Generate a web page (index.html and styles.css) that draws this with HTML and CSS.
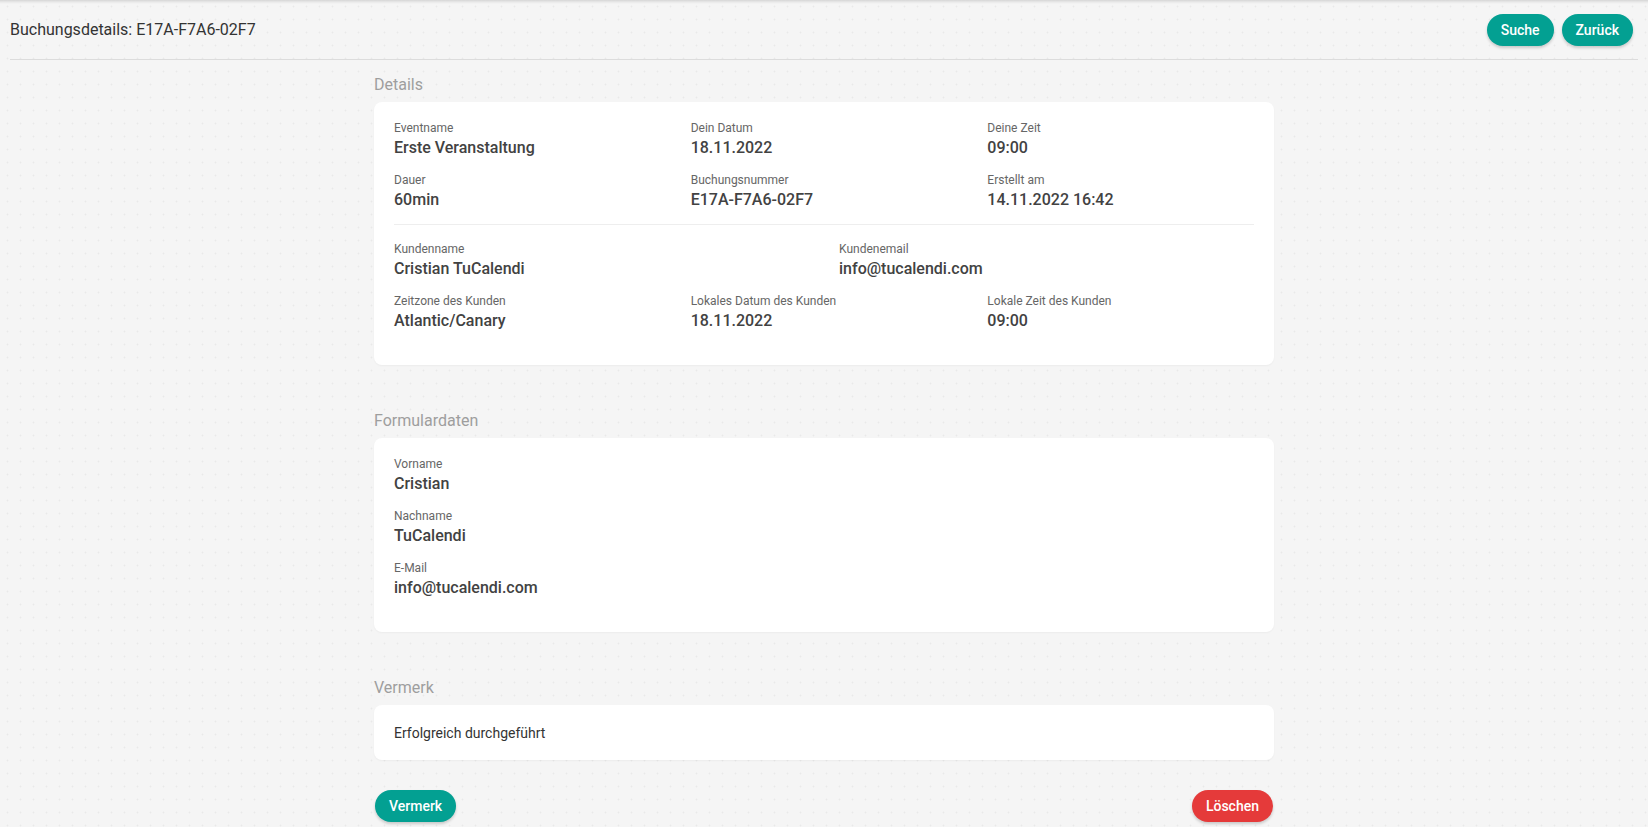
FILE: index.html
```html
<!DOCTYPE html>
<html lang="de">
<head>
<meta charset="utf-8">
<title>Buchungsdetails</title>
<link rel="stylesheet" href="styles.css">
</head>
<body>
<header class="header">
  <h1 class="title">Buchungsdetails: E17A-F7A6-02F7</h1>
  <div class="header-actions">
    <button class="btn btn-teal">Suche</button>
    <button class="btn btn-teal">Zurück</button>
  </div>
</header>

<main class="main">
  <section class="section">
    <h2 class="section-title">Details</h2>
    <div class="card">
      <div class="grid grid3">
        <div class="field"><div class="label">Eventname</div><div class="value">Erste Veranstaltung</div></div>
        <div class="field"><div class="label">Dein Datum</div><div class="value">18.11.2022</div></div>
        <div class="field"><div class="label">Deine Zeit</div><div class="value">09:00</div></div>
        <div class="field"><div class="label">Dauer</div><div class="value">60min</div></div>
        <div class="field"><div class="label">Buchungsnummer</div><div class="value">E17A-F7A6-02F7</div></div>
        <div class="field"><div class="label">Erstellt am</div><div class="value">14.11.2022 16:42</div></div>
      </div>
      <div class="divider"></div>
      <div class="grid grid2">
        <div class="field"><div class="label">Kundenname</div><div class="value">Cristian TuCalendi</div></div>
        <div class="field"><div class="label">Kundenemail</div><div class="value">info@tucalendi.com</div></div>
      </div>
      <div class="grid grid3 grid-next">
        <div class="field"><div class="label">Zeitzone des Kunden</div><div class="value">Atlantic/Canary</div></div>
        <div class="field"><div class="label">Lokales Datum des Kunden</div><div class="value">18.11.2022</div></div>
        <div class="field"><div class="label">Lokale Zeit des Kunden</div><div class="value">09:00</div></div>
      </div>
    </div>
  </section>

  <section class="section">
    <h2 class="section-title">Formulardaten</h2>
    <div class="card">
      <div class="grid grid1">
        <div class="field"><div class="label">Vorname</div><div class="value">Cristian</div></div>
        <div class="field"><div class="label">Nachname</div><div class="value">TuCalendi</div></div>
        <div class="field"><div class="label">E-Mail</div><div class="value">info@tucalendi.com</div></div>
      </div>
    </div>
  </section>

  <section class="section">
    <h2 class="section-title">Vermerk</h2>
    <div class="card card-note">
      <p class="note">Erfolgreich durchgeführt</p>
    </div>
  </section>

  <div class="actions">
    <button class="btn btn-teal">Vermerk</button>
    <button class="btn btn-red">Löschen</button>
  </div>
</main>
</body>
</html>
```

FILE: styles.css
```css
* {
  box-sizing: border-box;
}

html, body {
  margin: 0;
  padding: 0;
}

body {
  font-family: Roboto, "Noto Sans", "Liberation Sans", sans-serif;
  color: #333333;
  min-height: 100vh;
  background-color: #f5f5f5;
  background-image:
    linear-gradient(to bottom, rgba(0, 0, 0, 0.13) 0, rgba(0, 0, 0, 0.05) 2px, rgba(0, 0, 0, 0) 4px),
    radial-gradient(circle, #e9e9e9 0, #e9e9e9 0.7px, rgba(245, 245, 245, 0) 1.2px);
  background-size: 100% 4px, 13px 13px;
  background-repeat: no-repeat, repeat;
  background-position: 0 0, 1px 0;
}

.header {
  display: flex;
  align-items: center;
  justify-content: space-between;
  margin: 0 10px;
  padding: 14px 5px 13px 0;
  border-bottom: 1px solid #dcdcdc;
}

.title {
  margin: 0;
  font-size: 16px;
  font-weight: 400;
  line-height: 24px;
  color: #333333;
}

.header-actions {
  display: flex;
  gap: 8px;
}

.btn {
  height: 32px;
  padding: 0 14px;
  border: none;
  border-radius: 16px;
  font-family: Roboto, "Noto Sans", "Liberation Sans", sans-serif;
  font-size: 14px;
  font-weight: 500;
  line-height: 32px;
  color: #ffffff;
  cursor: pointer;
  box-shadow: 0 2px 3px rgba(0, 0, 0, 0.18);
}

.btn-teal {
  background: #03a092;
}

.btn-red {
  background: #e53a3a;
}

.main {
  width: 900px;
  margin: 0 auto;
  padding-top: 13px;
}

.section + .section {
  margin-top: 44px;
}

.section-title {
  margin: 0 0 5px;
  font-size: 16px;
  font-weight: 400;
  line-height: 24px;
  color: #9e9e9e;
}

.card {
  background: #ffffff;
  border-radius: 8px;
  padding: 18px 20px 32px;
  box-shadow: 0 1px 2px rgba(0, 0, 0, 0.04);
}

.grid {
  display: grid;
  column-gap: 30px;
  row-gap: 12px;
}

.grid1 {
  grid-template-columns: 1fr;
}

.grid2 {
  grid-template-columns: repeat(2, 1fr);
}

.grid3 {
  grid-template-columns: repeat(3, 1fr);
}

.grid-next {
  margin-top: 12px;
}

.label {
  font-size: 12px;
  line-height: 16px;
  color: #666666;
}

.value {
  font-size: 16px;
  font-weight: 500;
  line-height: 24px;
  color: #424242;
}

.divider {
  height: 1px;
  background: #eeeeee;
  margin: 12px 0 16px;
}

.card-note {
  padding: 18px 20px 17px;
}

.note {
  margin: 0;
  font-size: 14px;
  line-height: 20px;
  color: #333333;
}

.actions {
  display: flex;
  justify-content: space-between;
  margin-top: 30px;
  padding: 0 1px;
}
```
